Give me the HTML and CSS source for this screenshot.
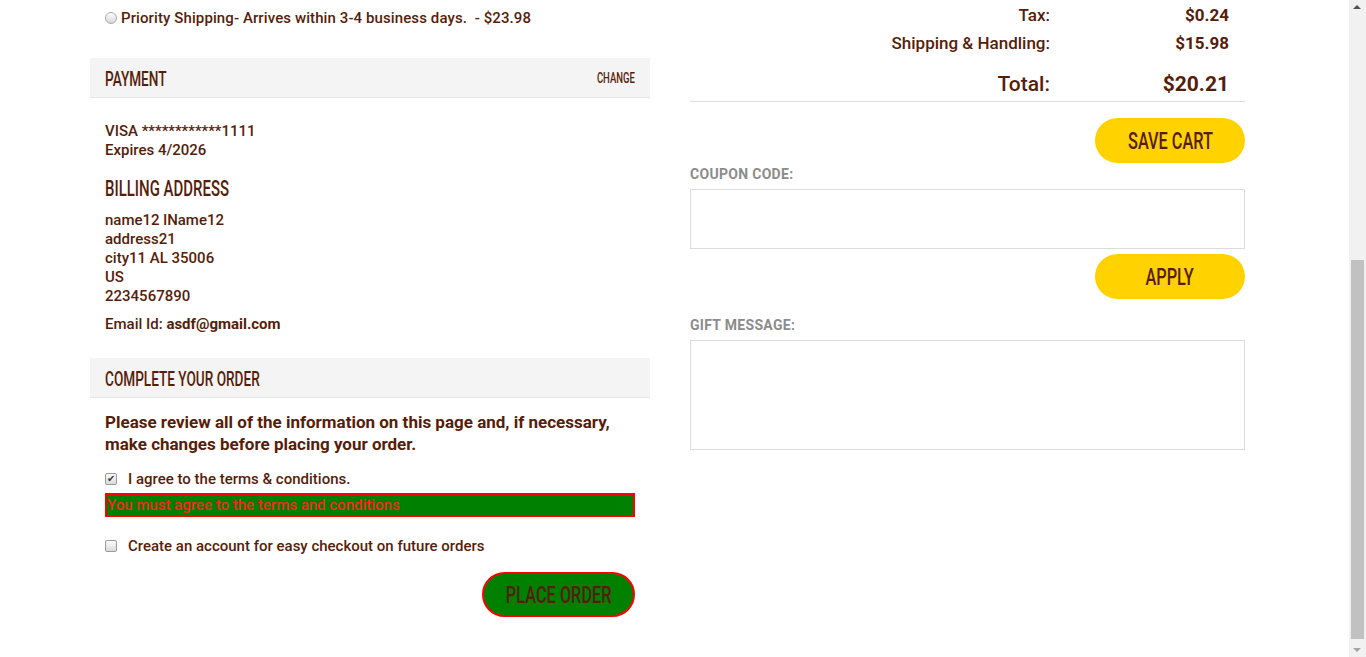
FILE: index.html
```html
<!DOCTYPE html>
<html lang="en">
<head>
<meta charset="utf-8">
<title>Checkout</title>
<link rel="stylesheet" href="styles.css">
</head>
<body>
<div class="wrap">
  <div class="col-left">
    <div class="ship-options">
      <label class="opt"><span class="radio"></span>Ground Shipping- Arrives within 5-7 business days.&nbsp; - $15.98</label>
      <label class="opt"><span class="radio"></span>Priority Shipping- Arrives within 3-4 business days.&nbsp; - $23.98</label>
    </div>

    <div class="sec-head payment-head"><h2><span class="cond">PAYMENT</span></h2><a class="change" href="#"><span class="cond right">CHANGE</span></a></div>
    <div class="sec-body">
      <p class="lines">VISA ************1111<br>Expires 4/2026</p>
      <h3><span class="cond">BILLING ADDRESS</span></h3>
      <p class="lines">name12 lName12<br>address21<br>city11 AL 35006<br>US<br>2234567890</p>
      <p class="lines email">Email Id: <b>asdf@gmail.com</b></p>
    </div>

    <div class="sec-head complete-head"><h2><span class="cond">COMPLETE YOUR ORDER</span></h2></div>
    <div class="sec-body complete">
      <p class="review">Please review all of the information on this page and, if necessary, make changes before placing your order.</p>
      <label class="check-row"><span class="cbox checked">✔</span>I agree to the terms &amp; conditions.</label>
      <div class="error">You must agree to the terms and conditions</div>
      <label class="check-row account"><span class="cbox"></span>Create an account for easy checkout on future orders</label>
      <div class="btn-row"><button class="btn place"><span class="cond mid">PLACE ORDER</span></button></div>
    </div>
  </div>

  <div class="col-right">
    <div class="summary">
      <div class="row"><span class="lbl">Tax:</span><span class="val">$0.24</span></div>
      <div class="row"><span class="lbl">Shipping &amp; Handling:</span><span class="val">$15.98</span></div>
      <div class="row total"><span class="lbl">Total:</span><span class="val">$20.21</span></div>
    </div>
    <div class="btn-row"><button class="btn yellow save"><span class="cond mid">SAVE CART</span></button></div>
    <div class="field-label coupon-label">COUPON CODE:</div>
    <input class="text-input" type="text">
    <div class="btn-row"><button class="btn yellow apply"><span class="cond mid">APPLY</span></button></div>
    <div class="field-label gift-label">GIFT MESSAGE:</div>
    <textarea class="text-area"></textarea>
  </div>
</div>

<div class="fake-scroll">
  <span class="arrow up"></span>
  <span class="thumb"></span>
  <span class="arrow down"></span>
</div>
</body>
</html>
```

FILE: styles.css
```css
html, body {
  margin: 0;
  padding: 0;
  overflow: hidden;
  height: 100%;
}
body {
  background: #fff;
  color: #561e0a;
  font-family: Roboto, "Liberation Sans", sans-serif;
  font-weight: 500;
  font-size: 15px;
  padding-right: 17px;
  box-sizing: border-box;
}
.wrap {
  width: 1169px;
  margin: 0 auto;
  display: flex;
  gap: 40px;
}
.col-left { width: 560px; }
.col-right { width: 555px; }

.cond {
  display: inline-block;
  font-family: Roboto, "Liberation Sans", sans-serif;
  font-weight: 500;
  transform: scaleX(0.68);
  transform-origin: left center;
  white-space: nowrap;
}
.cond.right { transform-origin: right center; }
.cond.mid { transform-origin: center center; }

.ship-options {
  margin-top: -18px;
  padding-left: 15px;
  display: flex;
  flex-direction: column;
  gap: 6px;
}
.opt {
  display: flex;
  align-items: center;
  line-height: 20px;
  height: 20px;
  white-space: pre;
  letter-spacing: 0.1px;
}
.radio {
  width: 12px;
  height: 12px;
  border-radius: 50%;
  border: 1px solid #a9a9a9;
  background: linear-gradient(#fdfdfd, #d8d8d8);
  margin-right: 4px;
  box-sizing: border-box;
  flex: none;
}

.sec-head {
  height: 39px;
  background: #f4f4f4;
  border-bottom: 1px solid #e6e6e6;
  padding: 0 15px;
  display: flex;
  align-items: center;
  justify-content: space-between;
}
.payment-head { margin-top: 30px; }
.complete-head { margin-top: 24px; }
.sec-head h2 {
  margin: 0;
  font-size: 20px;
  line-height: 24px;
  font-weight: 500;
  padding-top: 2px;
}
.change {
  font-size: 14px;
  color: #561e0a;
  text-decoration: none;
  line-height: 16px;
}
.sec-body { padding: 24px 15px 0; }
.lines { margin: 0; line-height: 19px; }
.sec-body h3 {
  margin: 17px 0 10px;
  font-size: 22px;
  line-height: 24px;
  font-weight: 500;
}
.email { margin-top: 9px; }
.email b { font-weight: 700; }

.sec-body.complete { padding-top: 13px; }
.review {
  margin: 0;
  font-size: 17px;
  font-weight: 700;
  line-height: 22px;
}
.check-row {
  display: flex;
  align-items: center;
  height: 20px;
  margin-top: 14px;
}
.check-row.account { margin-top: 19px; }
.cbox {
  width: 12px;
  height: 12px;
  border: 1px solid #9a9a9a;
  border-radius: 2px;
  background: linear-gradient(#fcfcfc, #dadada);
  box-sizing: border-box;
  margin-right: 11px;
  font-size: 10px;
  line-height: 10px;
  color: #3a3a3a;
  display: flex;
  align-items: center;
  justify-content: center;
  flex: none;
}
.error {
  margin-top: 4px;
  height: 24px;
  box-sizing: border-box;
  background: #008000;
  border: 2px solid #ff0000;
  color: #ff2020;
  line-height: 20px;
  padding-left: 0;
}
.btn-row {
  display: flex;
  justify-content: flex-end;
}
.complete .btn-row { margin-top: 16px; }

.btn {
  height: 45px;
  border-radius: 23px;
  border: 0;
  font-size: 24px;
  color: #561e0a;
  padding: 0;
  display: flex;
  align-items: center;
  justify-content: center;
  overflow: hidden;
}
.place {
  width: 153px;
  background: #008000;
  border: 2px solid #ff0000;
}
.yellow {
  width: 150px;
  background: #ffd200;
}

.summary {
  margin-top: 1px;
  border-bottom: 1px solid #dcdcdc;
}
.row {
  display: grid;
  grid-template-columns: 1fr 195px;
  height: 28px;
  align-items: center;
  font-size: 17px;
}
.row .lbl { text-align: right; }
.row .val { text-align: right; padding-right: 16px; font-weight: 700; }
.row.total {
  margin-top: 10px;
  height: 34px;
  font-size: 21px;
}
.save { margin-top: 16px; }

.field-label {
  color: #8c8c8c;
  font-size: 14px;
  font-weight: 700;
  letter-spacing: 0.3px;
  line-height: 16px;
}
.coupon-label { margin-top: 3px; }
.gift-label { margin-top: 18px; }
.text-input, .text-area {
  display: block;
  width: 555px;
  box-sizing: border-box;
  border: 1px solid #dcdcdc;
  margin: 7px 0 0;
  padding: 0;
  font: inherit;
  resize: none;
  outline: none;
}
.text-input { height: 60px; }
.apply { margin-top: 5px; }
.text-area { height: 110px; }

.fake-scroll {
  position: fixed;
  top: 0;
  right: 0;
  width: 17px;
  height: 100%;
  background: #f1f1f1;
}
.thumb {
  position: absolute;
  left: 2px;
  width: 13px;
  top: 260px;
  height: 379px;
  background: #c1c1c1;
}
.arrow {
  position: absolute;
  left: 4px;
  width: 0;
  height: 0;
  border-left: 4px solid transparent;
  border-right: 4px solid transparent;
}
.arrow.up {
  top: 5px;
  border-bottom: 4px solid #505050;
}
.arrow.down {
  bottom: 5px;
  border-top: 4px solid #a3a3a3;
}
```
